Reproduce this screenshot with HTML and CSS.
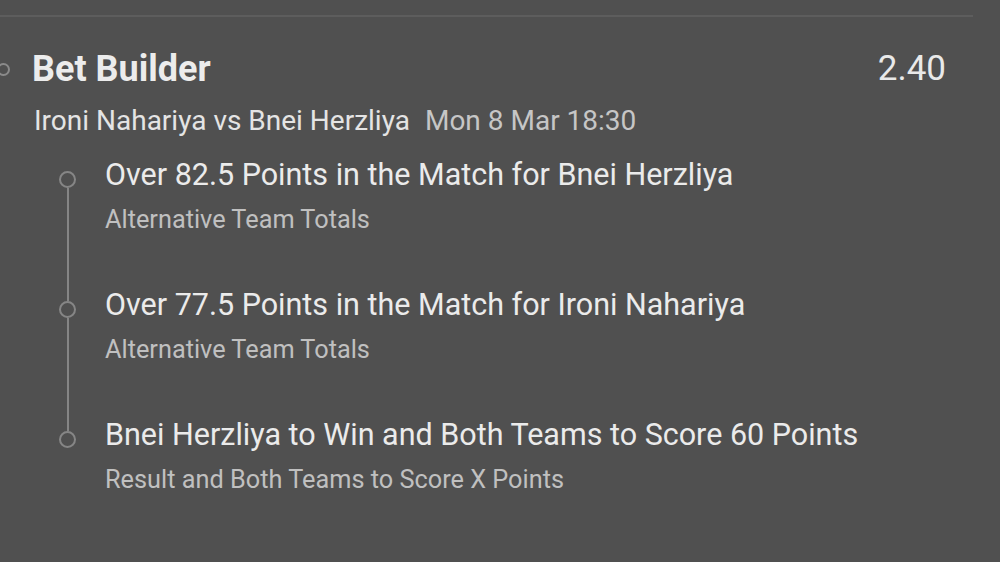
FILE: index.html
```html
<!DOCTYPE html>
<html>
<head>
<meta charset="utf-8">
<link rel="stylesheet" href="styles.css">
</head>
<body>
<div class="divider"></div>
<div class="header">
  <div class="header-left">
    <span class="dot"></span>
    <span class="title">Bet Builder</span>
  </div>
  <span class="odds">2.40</span>
</div>
<div class="match"><span class="teams">Ironi Nahariya vs Bnei Herzliya</span><span class="date">Mon 8 Mar 18:30</span></div>
<div class="legs">
  <div class="leg first">
    <div class="marker"><span class="seg top"></span><span class="ring"></span><span class="seg bottom"></span></div>
    <div class="leg-text">
      <div class="leg-title">Over 82.5 Points in the Match for Bnei Herzliya</div>
      <div class="leg-sub">Alternative Team Totals</div>
    </div>
  </div>
  <div class="leg">
    <div class="marker"><span class="seg top"></span><span class="ring"></span><span class="seg bottom"></span></div>
    <div class="leg-text">
      <div class="leg-title">Over 77.5 Points in the Match for Ironi Nahariya</div>
      <div class="leg-sub">Alternative Team Totals</div>
    </div>
  </div>
  <div class="leg last">
    <div class="marker"><span class="seg top"></span><span class="ring"></span><span class="seg bottom"></span></div>
    <div class="leg-text">
      <div class="leg-title">Bnei Herzliya to Win and Both Teams to Score 60 Points</div>
      <div class="leg-sub">Result and Both Teams to Score X Points</div>
    </div>
  </div>
</div>
</body>
</html>
```
FILE: styles.css
```css
html, body {
  margin: 0;
  padding: 0;
  background: #505050;
  height: 100%;
  overflow: hidden;
}
body {
  font-family: Roboto, "Liberation Sans", sans-serif;
  color: #e9e9e9;
}
.divider {
  width: 973px;
  height: 2px;
  margin-top: 15px;
  background: #5d5d5d;
}
.header {
  display: flex;
  justify-content: space-between;
  align-items: center;
  margin-top: 31px;
  padding: 0 54px 0 0;
  height: 42px;
}
.header-left {
  display: flex;
  align-items: center;
  gap: 22px;
}
.dot {
  width: 9px;
  height: 9px;
  margin-left: -3px;
  border: 2px solid #8a8a8a;
  border-radius: 50%;
}
.title {
  font-size: 36px;
  font-weight: 700;
  line-height: 42px;
  color: #ececec;
}
.odds {
  font-size: 35px;
  line-height: 42px;
  color: #e9e9e9;
}
.match {
  margin-top: 13px;
  padding-left: 34px;
  line-height: 36px;
  font-size: 28px;
  display: flex;
  gap: 15px;
}
.teams { color: #e4e4e4; }
.date { color: #c6c6c6; }
.legs {
  margin-top: 16px;
  padding-left: 59px;
}
.leg {
  display: flex;
  gap: 29px;
  height: 130px;
}
.marker {
  width: 17px;
  display: flex;
  flex-direction: column;
  align-items: center;
}
.seg {
  width: 2px;
  background: #858585;
}
.seg.top { height: 16px; }
.seg.bottom { flex: 1; }
.first .seg.top, .last .seg.bottom { background: transparent; }
.ring {
  width: 13px;
  height: 13px;
  border: 2px solid #868686;
  border-radius: 50%;
  flex: none;
}
.leg-title {
  font-size: 30.5px;
  line-height: 40px;
  color: #ebebeb;
}
.leg-sub {
  font-size: 25.3px;
  line-height: 50px;
  color: #c0c0c0;
}
```
